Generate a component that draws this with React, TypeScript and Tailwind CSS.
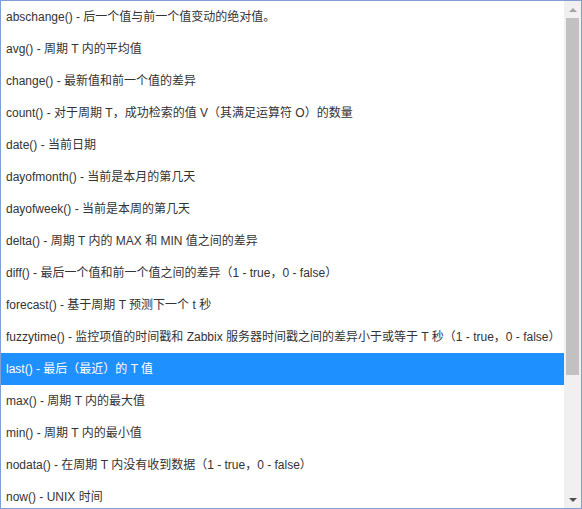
import React from 'react';

const functions = [
  'abschange() - 后一个值与前一个值变动的绝对值。',
  'avg() - 周期 T 内的平均值',
  'change() - 最新值和前一个值的差异',
  'count() - 对于周期 T，成功检索的值 V（其满足运算符 O）的数量',
  'date() - 当前日期',
  'dayofmonth() - 当前是本月的第几天',
  'dayofweek() - 当前是本周的第几天',
  'delta() - 周期 T 内的 MAX 和 MIN 值之间的差异',
  'diff() - 最后一个值和前一个值之间的差异（1 - true，0 - false）',
  'forecast() - 基于周期 T 预测下一个 t 秒',
  'fuzzytime() - 监控项值的时间戳和 Zabbix 服务器时间戳之间的差异小于或等于 T 秒（1 - true，0 - false）',
  'last() - 最后（最近）的 T 值',
  'max() - 周期 T 内的最大值',
  'min() - 周期 T 内的最小值',
  'nodata() - 在周期 T 内没有收到数据（1 - true，0 - false）',
  'now() - UNIX 时间',
];

const selected = 'last()';

// Static scrollbar, drawn to look like the classic Windows one
const ScrollBar: React.FC = () => (
  <div className="w-[17px] shrink-0 bg-[#f0f0f0] flex flex-col">
    <div className="h-[17px] flex items-center justify-center">
      <div className="w-0 h-0 border-x-[4px] border-x-transparent border-b-[4px] border-b-[#a3a3a3]" />
    </div>
    <div className="h-[357px] mx-[2px] bg-[#c1c1c1]" />
    <div className="flex-1" />
    <div className="h-[17px] flex items-center justify-center">
      <div className="w-0 h-0 border-x-[4px] border-x-transparent border-t-[4px] border-t-[#505050]" />
    </div>
  </div>
);

export default function App() {
  return (
    <div className="w-[582px] h-[509px] bg-white">
      <div className="w-full h-full border border-[#7f9fd6] flex overflow-hidden">
        <ul
          className="flex-1 overflow-hidden text-[12px] text-[#333]"
          style={{ fontFamily: '"Liberation Sans", Arial, "Noto Sans CJK SC", sans-serif' }}
        >
          {functions.map((fn) => {
            const active = fn.startsWith(selected);
            return (
              <li
                key={fn}
                className={`h-8 shrink-0 flex items-center pl-[5px] whitespace-nowrap ${
                  active ? 'bg-[#1e90ff] text-white' : ''
                }`}
              >
                {fn}
              </li>
            );
          })}
        </ul>
        <ScrollBar />
      </div>
    </div>
  );
}
